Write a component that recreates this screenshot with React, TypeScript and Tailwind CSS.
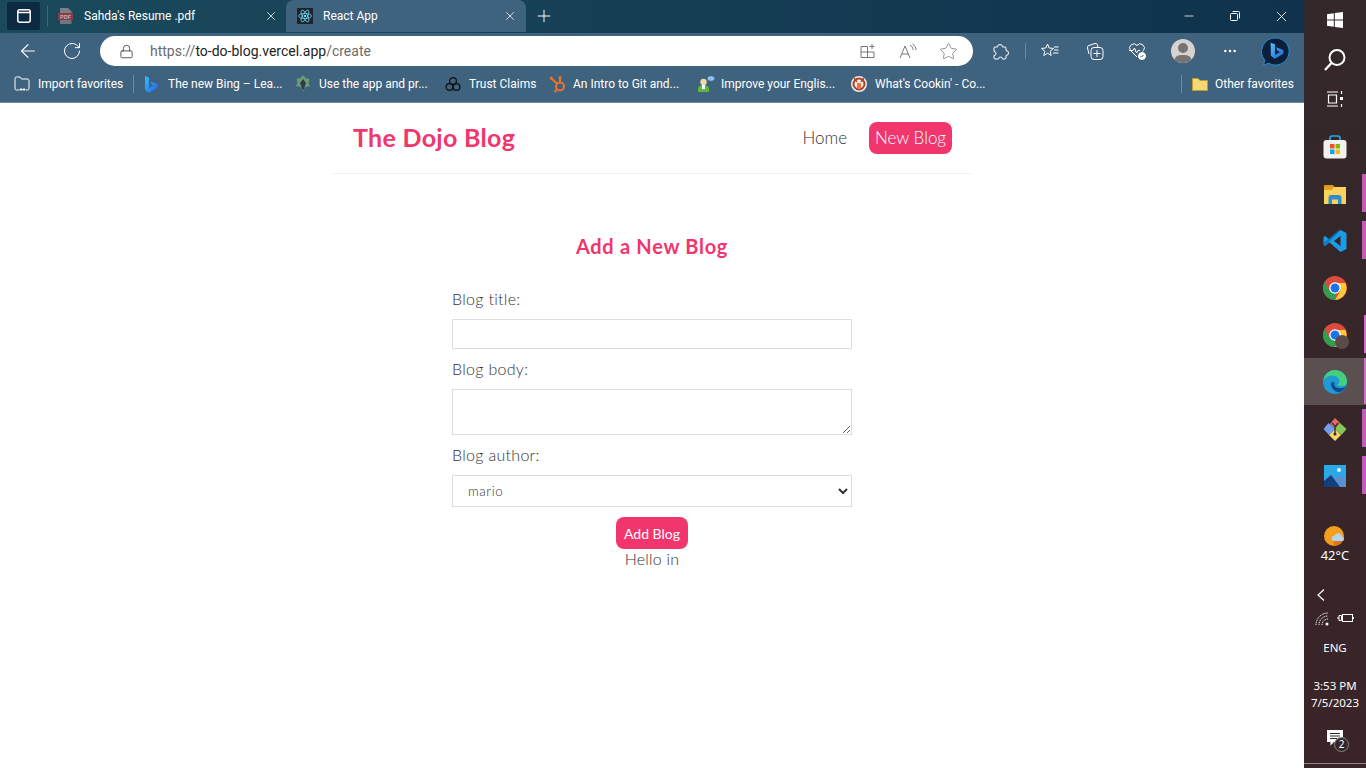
import React from "react";
import { ArrowLeft, RotateCw, Lock, Plus, X, Minus, Star, MoreHorizontal } from "lucide-react";

const ui = "font-['Roboto','Open_Sans',sans-serif]";
const bar = "font-['Noto_Sans','Open_Sans',sans-serif]";
const page = "font-['Lato','Open_Sans',sans-serif]";

function Win() {
  return <svg width="18" height="18" viewBox="0 0 18 18" fill="#fff"><path d="M1 3.2 7.8 2.2v6.3H1zM8.8 2 17 1v7.5H8.8zM1 9.5h6.8v6.3L1 14.8zM8.8 9.5H17V17l-8.2-1.1z" /></svg>;
}
function SearchIcon() {
  return <svg width="24" height="24" viewBox="0 0 24 24" fill="none" stroke="#fff" strokeWidth="2"><circle cx="14" cy="9.5" r="7.5" /><path d="M8.5 15 2 22" strokeWidth="2.4" /></svg>;
}
function TaskView() {
  return <svg width="18" height="16" viewBox="0 0 18 16" fill="none" stroke="#fff" strokeWidth="1.2"><path d="M1 1h11M1 15h11M2.500 4h8v8h-8zM15.500 0v3M15.500 13v3" /><rect x="14" y="6" width="3" height="3" fill="#fff" stroke="none" /></svg>;
}
function Store() {
  return <svg width="24" height="24" viewBox="0 0 24 24"><path d="M7 6V3.500C7 2 8 1 9 1h6c1 0 2 1 2 2.500V6" fill="none" stroke="#29a8e8" strokeWidth="1.600" /><rect x="0.500" y="5" width="23" height="18.500" rx="3" fill="#f3f1ef" /><rect x="7" y="9" width="4.500" height="4.500" fill="#f25022" /><rect x="12.500" y="9" width="4.500" height="4.500" fill="#7fba00" /><rect x="7" y="14.500" width="4.500" height="4.500" fill="#00a4ef" /><rect x="12.500" y="14.500" width="4.500" height="4.500" fill="#ffb900" /></svg>;
}
function Explorer() {
  return <svg width="24" height="20" viewBox="0 0 24 20"><path d="M1 1h9l2 2.500H1z" fill="#d99a1c" /><rect x="1" y="3" width="22" height="17" fill="#fbd25c" /><path d="M1 3h10L9 6H1z" fill="#e0a326" /><path d="M5.500 20v-6c0-2 1-3 3-3h7c2 0 3 1 3 3v6h-3.500v-4.500h-6V20z" fill="#2e8dd0" /></svg>;
}
function VSCode() {
  return <svg width="24" height="24" viewBox="0 0 24 24"><path d="M17.500 1 23.500 4v16L17.500 23 6.500 13.500 2 17 .5 16V8L2 7l4.500 3.500zM17.500 7l-6.500 5 6.500 5z" fill="#1c9be6" fillRule="evenodd" /><path d="M17.500 1 2.200 16.900.5 16V14l15-13z" fill="#0a6fb5" opacity=".75" /></svg>;
}
function Chrome({ size = 24 }: { size?: number }) {
  return <svg width={size} height={size} viewBox="0 0 24 24"><circle cx="12" cy="12" r="12" fill="#dd4b3e" /><path d="M12 24A12 12 0 0 1 1.600 6L7 15.500l5 1z" fill="#2f9e4f" /><path d="M12 24 17.500 14.500 12 7h10.400A12 12 0 0 1 12 24z" fill="#fcc934" /><circle cx="12" cy="12" r="5.800" fill="#fff" /><circle cx="12" cy="12" r="4.500" fill="#1a73e8" /></svg>;
}
function Edge({ size = 24 }: { size?: number }) {
  return <svg width={size} height={size} viewBox="0 0 24 24"><circle cx="12" cy="12" r="12" fill="#1f9ad6" /><path d="M1 8C3 2.500 8 0 12 0c7 0 12 5 12 12 0 3-3 4-6 4-2 0-3-.5-3.500-1.500 2-1 2.500-3 1.500-5C14.500 6 10 4.500 6 6 3.500 7 1.800 8.500 1 10z" fill="#44cf7c" /><path d="M8 14c0 5 5 8.500 9 8.300 2.500-1 5-3.500 6-6.300-1.500 1.600-4 2.300-7 2-4-.3-5.500-3-4.500-6-1.800 0-3.500 0-3.500 2z" fill="#0c4d92" /></svg>;
}
function Git() {
  return <svg width="24" height="24" viewBox="0 0 24 24"><path d="M12 12 7 7l5-6 5 5z" fill="#ea6a62" /><path d="M12 12l5-6 6.500 6-5 6z" fill="#84c75b" /><path d="M12 12 5.500 6 .5 12l5.500 6z" fill="#6f9ff0" /><path d="M12 12l6 6-6 6-6-6z" fill="#f7d76a" /><path d="M9 6l3 3v8M15 6l-3 4" stroke="#333" strokeWidth="1.400" fill="none" /><circle cx="12" cy="17" r="1.600" fill="#333" /></svg>;
}
function Photos() {
  return <svg width="22" height="22" viewBox="0 0 22 22"><rect width="22" height="22" fill="#2aa9e8" /><circle cx="15" cy="5" r="2" fill="#e9f5fc" /><path d="M0 22V15l7-6 5 4 4-3 6 5v7z" fill="#5b8fd2" /><path d="M0 22v-6l7-6 9 12z" fill="#123f7d" /></svg>;
}
function ReactFav() {
  return <svg width="16" height="16" viewBox="0 0 16 16"><rect width="16" height="16" rx="1" fill="#20232a" /><g fill="none" stroke="#61dafb" strokeWidth=".8"><ellipse cx="8" cy="8" rx="6.500" ry="2.500" /><ellipse cx="8" cy="8" rx="6.500" ry="2.500" transform="rotate(60 8 8)" /><ellipse cx="8" cy="8" rx="6.500" ry="2.500" transform="rotate(120 8 8)" /></g><circle cx="8" cy="8" r="1.300" fill="#61dafb" /></svg>;
}
function PdfFav() {
  return <svg width="15" height="16" viewBox="0 0 15 16"><path d="M2 0h8l3.500 3.500V5H2z" fill="#7d7f84" /><rect y="5" width="15" height="7" fill="#8a3b48" /><path d="M2 12h11.500v4H2z" fill="#73757a" /><text x="7.500" y="10.500" fontSize="5.500" fontWeight="700" fill="#c9b0b4" textAnchor="middle" fontFamily="Liberation Sans">PDF</text></svg>;
}
function BingFav() {
  return <svg width="14" height="18" viewBox="0 0 14 18"><defs><linearGradient id="bf" x1="0" y1="0" x2="1" y2="1"><stop offset="0" stopColor="#37bdf8" /><stop offset="1" stopColor="#2563eb" /></linearGradient></defs><path d="M1 1l4 1.500v10.500l4.500-2.500-2-1-1-3 7 2.500v3.500L5 18l-4-3z" fill="url(#bf)" /></svg>;
}
function UseApp() {
  return <svg width="16" height="17" viewBox="0 0 16 17"><path d="M8 0l2.500 3 4 1-1 4 1.500 3-5 1-2 5-2-5-5-1 1.500-3-1-4 4-1z" fill="#6d9c77" /><path d="M8 4l3 4-3 8-3-8z" fill="#333a48" /></svg>;
}
function Trust() {
  return <svg width="16" height="16" viewBox="0 0 16 16" fill="none" stroke="#111" strokeWidth="1.300"><circle cx="8" cy="5" r="3.400" /><circle cx="4.500" cy="11" r="3.400" /><circle cx="11.500" cy="11" r="3.400" /></svg>;
}
function Hubspot() {
  return <svg width="18" height="18" viewBox="0 0 18 18" fill="none" stroke="#f0702d" strokeWidth="2"><circle cx="11" cy="11.500" r="4" /><path d="M11 7V3M8 8.500 2.500 3.500M8 14.500 5.500 17" /><circle cx="2.200" cy="3" r="1.500" fill="#f0702d" stroke="none" /><circle cx="11" cy="2.500" r="1.500" fill="#f0702d" stroke="none" /></svg>;
}
function English() {
  return <svg width="18" height="18" viewBox="0 0 18 18"><ellipse cx="14" cy="3.500" rx="3.800" ry="2.800" fill="#8ec2f2" stroke="#2a4f7a" strokeWidth=".6" /><circle cx="6.500" cy="7" r="3.200" fill="#f0d9a8" /><path d="M1 17v-3c0-3 2.500-4 5.500-4s5.500 1 5.500 4v3z" fill="#5cb63f" /><rect x="5" y="10" width="3" height="4" fill="#fff" /></svg>;
}
function Cookin() {
  return <svg width="16" height="16" viewBox="0 0 16 16"><circle cx="8" cy="8" r="8" fill="#f3ece8" /><circle cx="8" cy="8" r="5.500" fill="none" stroke="#a8432c" strokeWidth="2" /><path d="M3 2l3 4M13 2l-3 4" stroke="#a8432c" strokeWidth="1.500" /><path d="M6 7h4v5H6z" fill="#e8733f" /></svg>;
}
function ImportFav() {
  return <svg width="16" height="16" viewBox="0 0 16 16" fill="none" stroke="#fff" strokeWidth="1"><path d="M5 14H2.500A1.500 1.500 0 0 1 1 12.500v-10A1.500 1.500 0 0 1 2.500 1H6l1.500 2h6A1.500 1.500 0 0 1 15 4.500v8a1.500 1.500 0 0 1-1.500 1.500H12" /><path d="M6 13.500h5M6 13.500 7.500 12M6 13.500 7.500 15M11 13.500 9.500 12M11 13.500 9.500 15" /></svg>;
}
function Restore() {
  return <svg width="10" height="10" viewBox="0 0 10 10" fill="none" stroke="#fff"><rect x=".5" y="2.500" width="7" height="7" rx="1" /><path d="M2.500 .5h6a1 1 0 0 1 1 1v6" /></svg>;
}
function TabLayout() {
  return <svg width="14" height="14" viewBox="0 0 14 14" fill="none" stroke="#fff" strokeWidth="1.500"><rect x=".8" y=".8" width="12.400" height="12.400" rx="2" /><path d="M.8 3.500h12.400" /></svg>;
}
function SplitAdd() {
  return <svg width="16" height="16" viewBox="0 0 16 16" fill="none" stroke="#777" strokeWidth="1"><path d="M1 3.500h6.500v5.500H14v5.500H1zM1 9h6.500M7.500 9v5.500M12 1v5M9.500 3.500h5" /></svg>;
}
function ReadAloud() {
  return <svg width="18" height="16" viewBox="0 0 18 16" fill="none" stroke="#777" strokeWidth="1"><path d="M1 15 6 3l5 12M2.800 11h6.400M11 2c2 1 3 3 3 5M13.500 1c2 1.300 3.500 3.500 3.500 6" /></svg>;
}
function PuzzleIcon() {
  return <svg width="17" height="17" viewBox="0 0 17 17" fill="none" stroke="#fff" strokeWidth="1"><path d="M3 4h2.500a2.500 2.500 0 0 1 5 0H13a1 1 0 0 1 1 1v2.500a2.500 2.500 0 0 1 0 5V15a1 1 0 0 1-1 1h-2.500a2 2 0 0 0-4 0H3a1 1 0 0 1-1-1v-2.500a2 2 0 0 0 0-4V5a1 1 0 0 1 1-1z" /></svg>;
}
function FavList() {
  return <svg width="18" height="16" viewBox="0 0 18 16" fill="none" stroke="#fff" strokeWidth="1"><path d="M6.500 1 8.200 5l4.300.4-3.300 2.800 1 4.300-3.700-2.300-3.700 2.300 1-4.300L.5 5.400 4.800 5zM13 4h4.500M13 7h4.500M12 10h5.500" /></svg>;
}
function Collections() {
  return <svg width="18" height="18" viewBox="0 0 18 18" fill="none" stroke="#fff" strokeWidth="1"><path d="M3 12 1.500 6A2 2 0 0 1 3 3.500L9 1.500a2 2 0 0 1 2.500 1.500l.5 2" /><rect x="5" y="5.500" width="12" height="12" rx="3" /><path d="M11 8v7M7.500 11.500h7" /></svg>;
}
function Health() {
  return <svg width="18" height="18" viewBox="0 0 18 18" fill="none" stroke="#fff" strokeWidth="1"><path d="M9 15 2.500 8.500a4 4 0 0 1 6.500-5 4 4 0 0 1 6.500 5l-1 1" /><path d="M1 8.500h4l1.500-2.500 2 5 1.500-2.500h2" /><circle cx="14" cy="14" r="3.500" fill="#fff" /><path d="m12.500 14 1 1 2-2" stroke="#3f6480" /></svg>;
}
function Profile() {
  return <svg width="24" height="24" viewBox="0 0 24 24"><circle cx="12" cy="12" r="12" fill="#d5d2d0" /><circle cx="12" cy="9" r="5" fill="#767472" /><path d="M3.500 20.500C5 16.500 8 16 12 16s7 .5 8.500 4.500A12 12 0 0 1 3.500 20.500z" fill="#767472" /></svg>;
}
function BingBtn() {
  return <svg width="31" height="31" viewBox="0 0 32 32"><defs><linearGradient id="bb" x1="0" y1="0" x2="1" y2="1"><stop offset="0" stopColor="#4fc3f7" /><stop offset="1" stopColor="#1d5fd1" /></linearGradient></defs><path d="M16 2a14 14 0 1 1-7 26.100L3.500 30l1.500-5A14 14 0 0 1 16 2z" fill="#0b1f38" stroke="#1e8fd8" strokeWidth="1" /><path d="M11 7l4.500 1.500v11l5-3-2.500-1.300-1.300-3.500 7.500 2.700v4l-9 5-4-3z" fill="url(#bb)" /></svg>;
}
function Weather() {
  return <svg width="22" height="22" viewBox="0 0 22 22"><circle cx="10" cy="10" r="10" fill="#f59d1c" /><path d="M10 20a10 10 0 0 0 9-6H9z" fill="#e2751c" /><path d="M9 15a3 3 0 0 1 1.500-5.500 4 4 0 0 1 7.500 1 2.500 2.500 0 0 1 1 4.500z" fill="#b7d4ec" /></svg>;
}
function Wifi() {
  return <svg width="14" height="14" viewBox="0 0 14 14" fill="none" stroke="#fff" strokeWidth="1" strokeDasharray="1.300 .7"><path d="M1 13A12 12 0 0 1 13 1M4 13a9 9 0 0 1 9-9M7 13a6 6 0 0 1 6-6" /><circle cx="12" cy="12" r="1.500" fill="#fff" stroke="none" /></svg>;
}
function Battery() {
  return <svg width="17" height="12" viewBox="0 0 17 12" fill="none" stroke="#fff"><rect x="5.500" y="2.500" width="10" height="7" /><path d="M16.500 5v2" /><path d="M0 6h2M2 3.500h2.500v5H2zM4.500 4.500h1.500M4.500 7.500h1.500" /></svg>;
}
function Notif() {
  return <svg width="16" height="16" viewBox="0 0 16 16" fill="#fff"><path d="M0 0h16v12h-9l-3.500 3.500V12H0z" /><path d="M3 3.500h10M3 6h10M3 8.500h7" stroke="#33272a" strokeWidth="1" /></svg>;
}

const bookmarks: { w: string; icon: React.ReactNode; text: string }[] = [
  { w: "w-[151px]", icon: <BingFav />, text: "The new Bing – Lea..." },
  { w: "w-[150px]", icon: <UseApp />, text: "Use the app and pr..." },
  { w: "w-[104px]", icon: <Trust />, text: "Trust Claims" },
  { w: "w-[148px]", icon: <Hubspot />, text: "An Intro to Git and..." },
  { w: "w-[154px]", icon: <English />, text: "Improve your Englis..." },
  { w: "w-[154px]", icon: <Cookin />, text: "What's Cookin' - Co..." },
];

function Tab({ active, icon, title, w }: { active?: boolean; icon: React.ReactNode; title: string; w: string }) {
  return (
    <div className={`${w} h-[32px] flex items-center rounded-t-lg ${active ? "bg-[#3f627e] pl-[11px] pr-[9px]" : "pl-[10px] pr-[8px]"}`}>
      <div className="w-[26px] flex items-center">{icon}</div>
      <span className="flex-1 text-[12px] text-white whitespace-nowrap">{title}</span>
      <X size={14} color="#fff" strokeWidth={1.3} />
    </div>
  );
}

function Row({ children, mark, active }: { children: React.ReactNode; mark?: "a" | "b" | "c"; active?: boolean }) {
  return (
    <div className={`relative h-[47px] flex items-center justify-center ${active ? "bg-[#5b504f]" : ""}`}>
      {children}
      {mark === "a" && <div className="absolute right-0 top-[4px] h-[38px] w-[4px] bg-[#c25cbc]" />}
      {mark === "b" && <div className="absolute right-0 top-[4px] h-[38px] w-[2px] bg-[#d86cd0]" />}
      {mark === "c" && <div className="absolute right-0 top-0 h-[46px] w-[2px] bg-[#d86cd0]" />}
    </div>
  );
}

export default function App() {
  return (
    <div className="flex w-[1366px] h-[768px] overflow-hidden bg-white">
      <div className="w-[1304px] h-full flex flex-col">
        {/* Tabs */}
        <div className={`h-[33px] bg-linear-to-r from-[#1b4a5c] to-[#10324d] flex items-start ${ui}`}>
          <div className="w-[33px] h-[28px] ml-[7px] mt-[2px] bg-[#0c2a42] flex items-center justify-center rounded-[2px]"><TabLayout /></div>
          <div className="w-px h-[20px] mt-[6px] ml-[7px] bg-[#45667c]" />
          <Tab w="w-[238px]" icon={<PdfFav />} title="Sahda's Resume .pdf" />
          <Tab active w="w-[240px]" icon={<ReactFav />} title="React App" />
          <div className="w-[36px] h-[32px] flex items-center justify-center"><Plus size={20} color="#fff" strokeWidth={1.2} /></div>
          <div className="flex-1" />
          <div className="w-[46px] h-[32px] flex items-center justify-center"><Minus size={14} color="#fff" strokeWidth={1.3} /></div>
          <div className="w-[46px] h-[32px] flex items-center justify-center"><Restore /></div>
          <div className="w-[46px] h-[32px] flex items-center justify-center"><X size={17} color="#fff" strokeWidth={1.2} /></div>
        </div>
        {/* Toolbar */}
        <div className={`h-[36px] bg-[#3f627e] flex items-center ${ui}`}>
          <div className="w-[100px] flex shrink-0 items-center">
            <div className="w-[56px] flex justify-center"><ArrowLeft size={22} color="#fff" strokeWidth={1.2} /></div>
            <div className="w-[32px] flex justify-center"><RotateCw size={20} color="#fff" strokeWidth={1.2} /></div>
          </div>
          <div className="w-[873px] h-[30px] bg-white rounded-full flex items-center pl-[19px] pr-[5px]">
            <Lock size={15} color="#444" strokeWidth={1.4} />
            <div className="ml-[16px] text-[14px] whitespace-nowrap text-[#6b6b6b]">https://<span className="text-[#222]">to-do-blog.vercel.app</span>/create</div>
            <div className="flex-1" />
            <div className="w-[40px] flex justify-center"><SplitAdd /></div>
            <div className="w-[40px] flex justify-center"><ReadAloud /></div>
            <div className="w-[40px] flex justify-center"><Star size={19} color="#777" strokeWidth={1} /></div>
          </div>
          <div className="flex items-center flex-1">
            <div className="w-[52px] flex justify-center pl-[3px]"><PuzzleIcon /></div>
            <div className="w-px h-[16px] bg-[#6d899e]" />
            <div className="w-[48px] flex justify-center"><FavList /></div>
            <div className="w-[41px] flex justify-center"><Collections /></div>
            <div className="w-[44px] flex justify-center"><Health /></div>
            <div className="w-[48px] flex justify-center"><Profile /></div>
            <div className="w-[45px] flex justify-center"><MoreHorizontal size={16} color="#fff" strokeWidth={1.8} /></div>
            <div className="w-[31px] ml-[8px] flex justify-center"><BingBtn /></div>
          </div>
        </div>
        {/* Bookmarks */}
        <div className={`h-[34px] bg-[#3f627e] border-b border-[#6f8aa0] pb-[4px] flex items-center text-[12px] text-white ${ui}`}>
          <div className="w-[14px]" />
          <div className="w-[119px] flex items-center gap-[8px]"><ImportFav /><span className="whitespace-nowrap">Import favorites</span></div>
          <div className="w-px h-[18px] bg-[#6d899e] mr-[10px]" />
          {bookmarks.map((b) => (
            <div key={b.text} className={`${b.w} flex items-center`}>
              <div className="w-[24px] flex items-center">{b.icon}</div>
              <span className="whitespace-nowrap">{b.text}</span>
            </div>
          ))}
          <div className="flex-1" />
          <div className="w-px h-[18px] bg-[#6d899e] mr-[10px]" />
          <div className="w-[23px]"><svg width="16" height="14" viewBox="0 0 16 14"><path d="M.5 1.500h5.500l2 2h7.500v10H.5z" fill="#f6d977" stroke="#c49a2c" /></svg></div>
          <span className="w-[79px] whitespace-nowrap mr-[10px]">Other favorites</span>
        </div>

        {/* Page */}
        <div className={`flex-1 bg-white text-[#333] ${page}`}>
          <nav className="w-[640px] h-[71px] mx-auto px-[20px] flex items-center border-b border-[#f2f2f2]">
            <h1 className="text-[25px] font-bold text-[#f1356d] tracking-[.3px] ml-[1px]">The Dojo Blog</h1>
            <div className="ml-auto flex items-center">
              <a className="text-[#333] text-[17px] mr-[22px] font-light">Home</a>
              <a className="bg-[#f1356d] text-white text-[17px] font-light rounded-lg h-[32px] w-[83px] flex items-center justify-center">New Blog</a>
            </div>
          </nav>
          <div className="w-[400px] mx-auto mt-[58px] flex flex-col items-center">
            <h2 className="text-[20px] font-bold text-[#f1356d] h-[28px] leading-[28px] tracking-[.7px]">Add a New Blog</h2>
            <form className="w-full mt-[29px] flex flex-col">
              <label className="h-[20px] mb-[10px] leading-[20px] text-[16px] font-light tracking-[.3px]">Blog title:</label>
              <input className="w-full h-[30px] border border-[#ddd] outline-none mb-[10px] bg-white" />
              <label className="h-[20px] mb-[10px] leading-[20px] text-[16px] font-light tracking-[.3px]">Blog body:</label>
              <textarea className="block w-full h-[46px] border border-[#ddd] outline-none resize-y mb-[10px] bg-white" />
              <label className="h-[20px] mb-[10px] leading-[20px] text-[16px] font-light tracking-[.3px]">Blog author:</label>
              <select className="block w-full h-[32px] border border-[#ddd] outline-none bg-white pl-[11px] text-[13.300px] font-light tracking-[.6px] text-[#333]">
                <option>mario</option>
              </select>
              <button type="button" className="self-center mt-[10px] w-[72px] h-[32px] bg-[#f1356d] text-white rounded-lg text-[14px]">Add Blog</button>
              <p className="self-center h-[20px] leading-[20px] text-[16px] font-light text-[#333] tracking-[.2px]">Hello in</p>
            </form>
          </div>
        </div>
      </div>

      {/* Taskbar */}
      <div className={`relative w-[62px] h-full bg-linear-to-b from-[#33282a] to-[#3a2428] flex flex-col text-white ${bar}`}>
        <div className="h-[40px] flex items-center justify-center"><Win /></div>
        <div className="h-[40px] flex items-center justify-center"><SearchIcon /></div>
        <div className="h-[38px] mb-[5px] flex items-center justify-center"><TaskView /></div>
        <Row><Store /></Row>
        <Row mark="a"><Explorer /></Row>
        <Row mark="a"><VSCode /></Row>
        <Row><Chrome /></Row>
        <Row mark="b"><div className="relative"><Chrome /><div className="absolute right-[-2px] bottom-[-2px] w-[14px] h-[14px] rounded-full bg-[#5a4a48]" /></div></Row>
        <Row mark="c" active><Edge /></Row>
        <Row mark="a"><Git /></Row>
        <Row mark="a"><Photos /></Row>
        <div className="mt-[27px] h-[22px] pl-[20px] flex justify-start"><Weather /></div>
        <div className="text-[13px] text-center leading-[18px] mt-[-2px]">42°C</div>
        <div className="h-[14px] mt-[25px] pl-[13px] flex justify-start"><svg width="8" height="12" viewBox="0 0 8 12" fill="none" stroke="#fff" strokeWidth="1.200"><path d="M7 .5 1 6l6 5.500" /></svg></div>
        <div className="mt-[9px] h-[14px] pl-[11px] flex justify-start gap-[8px]"><Wifi /><Battery /></div>
        <div className="text-[11.500px] text-center mt-[15px] leading-[14px]">ENG</div>
        <div className="text-[11.500px] text-center mt-[22px] leading-[17px]">3:53 PM</div>
        <div className="text-[11.500px] text-center leading-[17px]">7/5/2023</div>
        <div className="relative mt-[19px] h-[16px] flex justify-center">
          <Notif />
          <div className="absolute left-[30px] top-[7px] w-[15px] h-[15px] rounded-full bg-[#33272a] border border-[#888] text-[10px] leading-[13px] text-center">2</div>
        </div>
        <div className="mt-auto mb-[4px] h-px bg-[#888]" />
      </div>
    </div>
  );
}
